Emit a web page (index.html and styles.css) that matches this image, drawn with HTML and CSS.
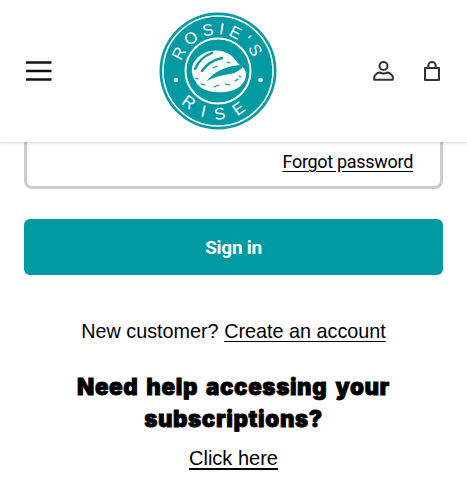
FILE: index.html
```html
<!DOCTYPE html>
<html lang="en">
<head>
<meta charset="utf-8">
<title>Sign in</title>
<link rel="stylesheet" href="styles.css">
</head>
<body>
<header class="site-header">
  <button class="menu-btn" aria-label="Menu">
    <svg width="26" height="22" viewBox="0 0 26 22"><path d="M0 2.500h25.500M0 11h25.500M0 19.500h25.500" stroke="#111" stroke-width="2.600" fill="none"/></svg>
  </button>
  <svg class="logo" width="118" height="118" viewBox="0 0 118 118">
    <defs>
      <path id="arcTop" d="M22 66a37.500 37.500 0 1 1 74 0"/>
      <path id="arcBottom" d="M11 59a48 48 0 0 0 96 0"/>
    </defs>
    <circle cx="59" cy="59" r="58.500" fill="#009aa2"/>
    <circle cx="59" cy="59" r="55" fill="none" stroke="#fff" stroke-width="1.600"/>
    <circle cx="59" cy="59" r="32.500" fill="none" stroke="#fff" stroke-width="2"/>
    <circle cx="17" cy="68" r="2.300" fill="#fff"/>
    <circle cx="101.500" cy="68" r="2.300" fill="#fff"/>
    <text class="logo-text"><textPath href="#arcTop" startOffset="50%" text-anchor="middle">ROSIE'S</textPath></text>
    <text class="logo-text logo-text-wide"><textPath href="#arcBottom" startOffset="50%" text-anchor="middle">RISE</textPath></text>
    <path d="M33 56c1-8 9-15 18-17 12-2 21 2 27 11 3 4 9 6 9 12 0 10-9 17-21 18-14 1-23-2-28-8-3-5-6-10-5-16z" fill="#fff"/>
    <path d="M36 57c3-7 9-13 17-16M43 59c4-6 11-11 20-13" stroke="#009aa2" stroke-width="2.400" fill="none" stroke-linecap="round"/>
    <path d="M48 69c6-9 20-16 37-16-3 5-8 8-14 9-8 1-16 3-23 7z" fill="#009aa2"/>
    <path d="M36 66l3 1M42 72l4 1M55 75l5-2M66 72l5 1M76 69l3-2M80 64l2 1M54 56l4-2M68 50l3 1" stroke="#009aa2" stroke-width="1.100" stroke-linecap="round"/>
  </svg>
  <nav class="header-icons">
    <svg width="21" height="20" viewBox="0 0 21 20"><circle cx="10.500" cy="5" r="4" fill="none" stroke="#333" stroke-width="2"/><path d="M1.200 18.800v-2c0-3 3-5 5.300-5.300 2.500 1.300 5.500 1.300 8 0 2.300.3 5.300 2.300 5.300 5.300v2z" fill="none" stroke="#333" stroke-width="2" stroke-linejoin="round"/></svg>
    <svg width="16" height="20" viewBox="0 0 16 20"><path d="M1 7h14v12h-14z" fill="none" stroke="#333" stroke-width="2" stroke-linejoin="round"/><path d="M4.300 7v-2.300a3.700 3.700 0 0 1 7.400 0v2.300" fill="none" stroke="#333" stroke-width="2"/></svg>
  </nav>
</header>
<main class="content">
  <div class="field-box"><a href="#" class="link">Forgot password</a></div>
  <button class="sign-in">Sign in</button>
  <p class="new-customer">New customer? <a href="#" class="link">Create an account</a></p>
  <h2 class="help-title">Need help accessing your subscriptions?</h2>
  <p class="help-link"><a href="#" class="link">Click here</a></p>
</main>
</body>
</html>
```
FILE: styles.css
```css
* { box-sizing: border-box; }
html, body { margin: 0; padding: 0; }
body {
  width: 467px;
  height: 502px;
  overflow: hidden;
  background: #fff;
  color: #000;
  font-family: "Liberation Sans", Arial, sans-serif;
}
.site-header {
  height: 142px;
  display: flex;
  align-items: center;
  justify-content: space-between;
  padding: 0 27px 0 26px;
  box-shadow: 0 1px 3px rgba(0, 0, 0, 0.18);
  position: relative;
}
.menu-btn {
  border: 0;
  background: none;
  padding: 0;
  width: 26px;
  height: 22px;
  display: flex;
}
.logo {
  position: absolute;
  left: 159px;
  top: 12px;
}
.logo-text {
  fill: #fff;
  font-family: "Liberation Sans", Arial, sans-serif;
  font-size: 16.500px;
  letter-spacing: 4.500px;
}
.logo-text-wide {
  letter-spacing: 11px;
}
.header-icons {
  display: flex;
  align-items: center;
  gap: 30px;
}
.content {
  padding: 0 24px;
  text-align: center;
}
.field-box {
  height: 47px;
  border: 3px solid #ccc;
  border-top: 0;
  border-radius: 0 0 8px 8px;
  text-align: right;
  padding: 9px 27px 0 0;
  font-family: Roboto, sans-serif;
  font-size: 18px;
  line-height: 22px;
  letter-spacing: -0.300px;
}
.link {
  color: #000;
  text-decoration: underline;
  text-underline-offset: 3px;
}
.sign-in {
  display: block;
  width: 100%;
  height: 56px;
  margin-top: 30px;
  border: 0;
  border-radius: 6px;
  background: #009aa2;
  color: #fff;
  font-family: Roboto, sans-serif;
  font-weight: 700;
  font-size: 19px;
  letter-spacing: -0.300px;
}
.new-customer {
  margin: 44px 0 0;
  font-size: 19.800px;
  line-height: 24px;
}
.help-title {
  margin: 28px auto 0;
  width: 340px;
  font-family: Inter, sans-serif;
  font-weight: 900;
  font-size: 22.400px;
  line-height: 32px;
  letter-spacing: 0.600px;
  word-spacing: 3px;
  -webkit-text-stroke: 0.800px #000;
}
.help-link {
  margin: 11px 0 0;
  font-size: 20px;
  line-height: 24px;
}
```
